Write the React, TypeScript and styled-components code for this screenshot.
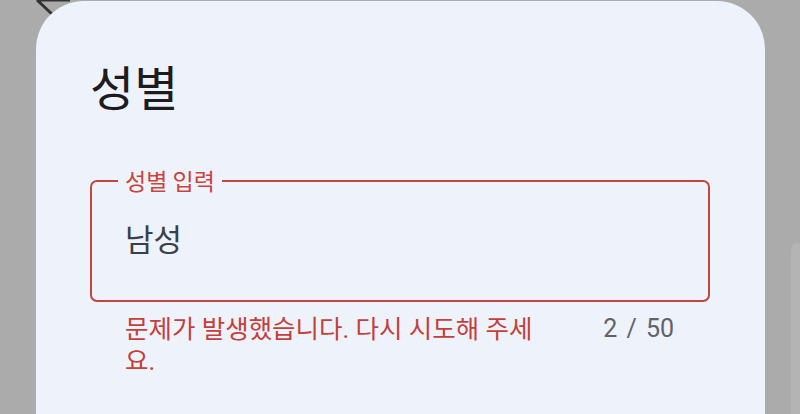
import React from "react";
import styled, { createGlobalStyle } from "styled-components";

const Global = createGlobalStyle`
  html, body { margin: 0; padding: 0; }
  body { width: 800px; height: 414px; overflow: hidden; background: #ababab; }
`;

const Screen = styled.div`
  position: relative;
  width: 800px;
  height: 414px;
  overflow: hidden;
  background: #ababab;
  font-family: "Noto Sans CJK KR", Roboto, sans-serif;
`;

const PageHeader = styled.div`
  display: flex;
  align-items: flex-end;
  height: 18px;
  padding-left: 30px;
`;

const BackArrow = styled.svg`
  display: block;
  width: 44px;
  height: 18px;
`;

const PageSideCard = styled.div`
  position: absolute;
  left: 791px;
  top: 243px;
  width: 40px;
  height: 200px;
  background: #b4b4b4;
  border-radius: 6px 0 0 0;
`;

const Dialog = styled.div`
  position: absolute;
  left: 36px;
  top: 1px;
  width: 729px;
  height: 480px;
  box-sizing: border-box;
  background: #eef2fb;
  border-radius: 48px 48px 0 0;
  padding: 51px 55px 0 54px;
  display: flex;
  flex-direction: column;
`;

const Title = styled.h2`
  margin: 0;
  font-family: "Noto Sans CJK KR", sans-serif;
  font-weight: 400;
  font-size: 48px;
  line-height: 66px;
  color: #1c1c1e;
`;

const Field = styled.div`
  position: relative;
  margin-top: 62px;
  height: 122px;
  box-sizing: border-box;
  border: 2px solid #c3453f;
  border-radius: 7px;
  padding: 0 33px;
  display: flex;
  align-items: center;
`;

const FieldLabel = styled.span`
  position: absolute;
  left: 26px;
  top: -17px;
  padding: 0 7px;
  background: #eef2fb;
  font-family: "Noto Sans CJK KR", sans-serif;
  font-size: 23px;
  line-height: 30px;
  color: #c9443f;
`;

const FieldValue = styled.span`
  font-family: "Noto Sans CJK KR", sans-serif;
  font-size: 31px;
  line-height: 40px;
  color: #3b3f47;
  margin-top: -7px;
`;

const Support = styled.div`
  display: flex;
  align-items: flex-start;
  padding: 11px 36px 0 35px;
`;

const ErrorText = styled.div`
  flex: 1;
  font-family: Roboto, "Noto Sans CJK KR", sans-serif;
  font-size: 25.5px;
  line-height: 32px;
  color: #c4403a;
`;

const Counter = styled.div`
  flex-shrink: 0;
  margin-left: 53px;
  font-family: Roboto, sans-serif;
  font-size: 25px;
  line-height: 32px;
  word-spacing: 3px;
  color: #5f6368;
  white-space: pre;
`;

export default function App() {
  return (
    <Screen>
      <Global />
      <PageHeader>
        <BackArrow viewBox="0 0 44 18">
          <path d="M40 0 H7 M7 0 L24 16" stroke="#333" strokeWidth="3" fill="none" strokeLinecap="butt" />
        </BackArrow>
      </PageHeader>
      <PageSideCard />
      <Dialog>
        <Title>성별</Title>
        <Field>
          <FieldLabel>성별 입력</FieldLabel>
          <FieldValue>남성</FieldValue>
        </Field>
        <Support>
          <ErrorText>문제가 발생했습니다. 다시 시도해 주세요.</ErrorText>
          <Counter>2 / 50</Counter>
        </Support>
      </Dialog>
    </Screen>
  );
}
